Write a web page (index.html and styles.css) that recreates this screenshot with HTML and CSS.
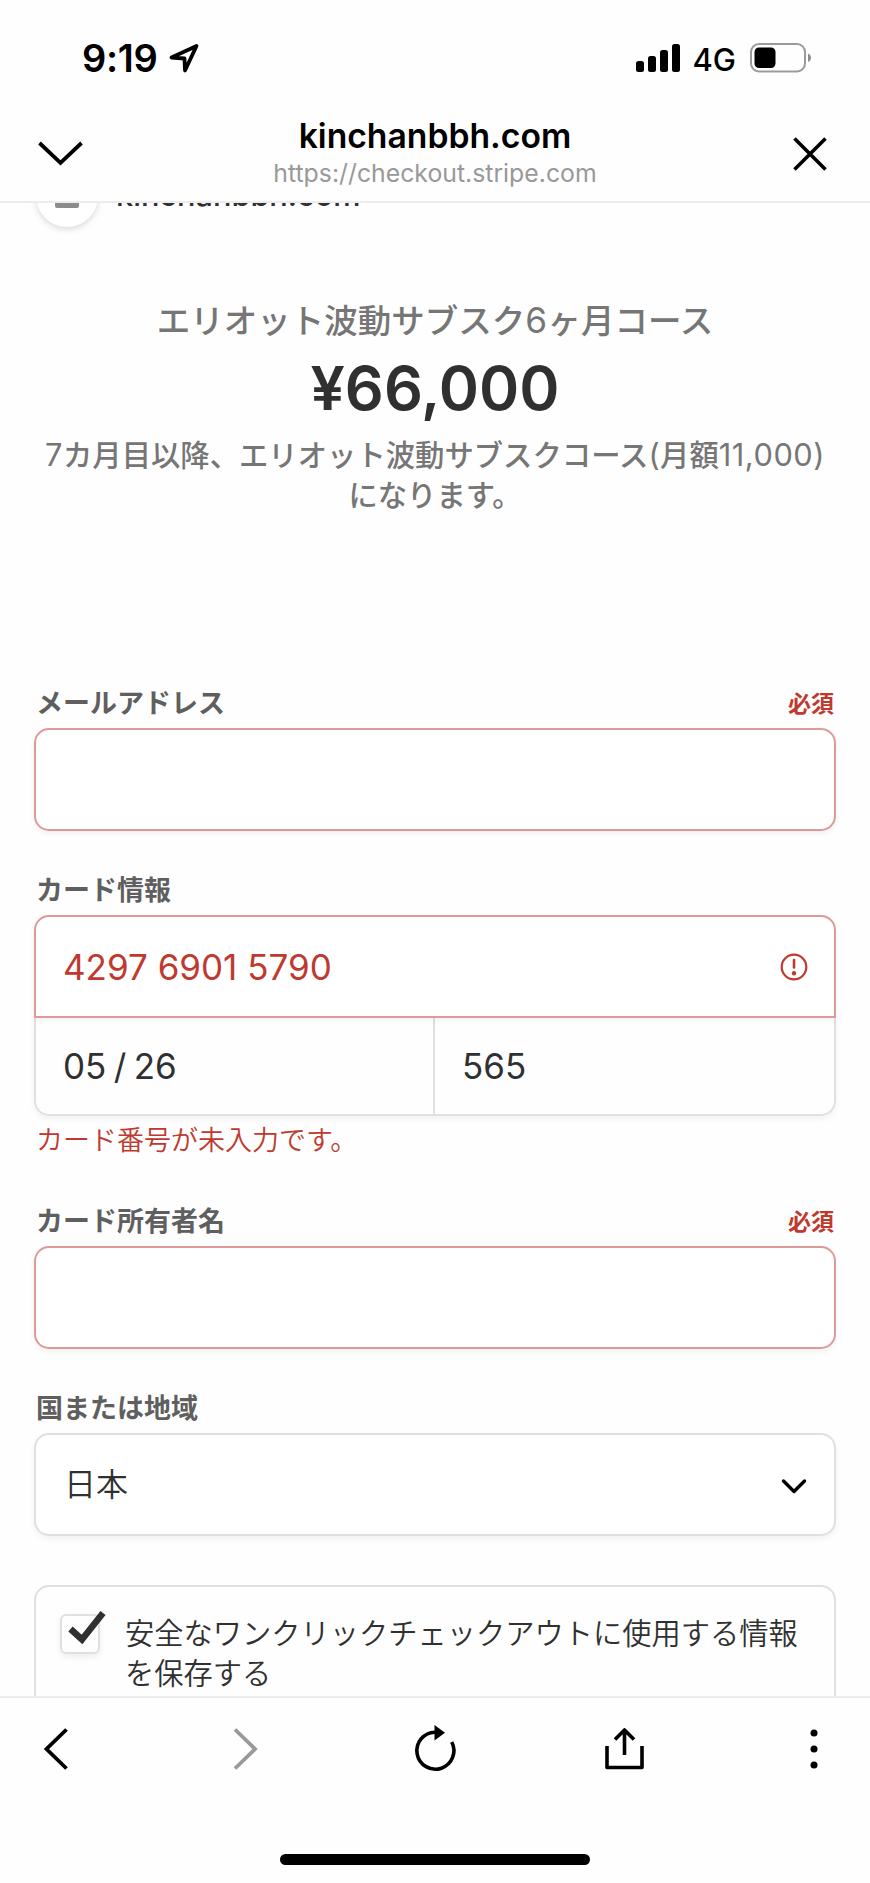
FILE: index.html
```
<!DOCTYPE html>
<html lang="ja">
<head>
  <meta charset="UTF-8">
  <meta name="viewport" content="width=device-width, initial-scale=1.0">
  <title>kinchanbbh.com</title>
  <link rel="stylesheet" href="styles.css">
</head>
<body>
  <!-- ステータスバー -->
  <div class="status-bar">
    <span class="time">9:19</span>
    <svg class="location" width="30" height="30" viewBox="0 0 30 30"><path d="M27.500 3 2.500 14.500l13 1 .5 12z" fill="none" stroke="#000" stroke-width="3.800" stroke-linejoin="round"/></svg>
    <svg class="signal" width="44" height="28" viewBox="0 0 44 28">
      <rect x="0" y="17" width="8" height="11" rx="2.5"/>
      <rect x="12" y="12" width="8" height="16" rx="2.5"/>
      <rect x="24" y="6" width="8" height="22" rx="2.5"/>
      <rect x="36" y="0" width="8" height="28" rx="2.5"/>
    </svg>
    <span class="network">4G</span>
    <svg class="battery" width="62" height="30" viewBox="0 0 62 30">
      <rect x="1" y="1" width="54" height="27.5" rx="8" fill="none" stroke="#9b9b9b" stroke-width="2"/>
      <rect x="4.5" y="4.5" width="21" height="20.5" rx="4.5"/>
      <path d="M58 10.5c4 1.500 4 7 0 8.500z" fill="#8e8e8e"/>
    </svg>
  </div>

  <!-- ヘッダー -->
  <div class="header">
    <svg width="48" height="28" viewBox="0 0 48 28"><path d="M3.500 4 24.500 24 45.500 4" fill="none" stroke="#000" stroke-width="3.800"/></svg>
    <div class="header-title">
      <div class="site">kinchanbbh.com</div>
      <div class="url">https://checkout.stripe.com</div>
    </div>
    <svg width="36" height="36" viewBox="0 0 36 36"><path d="M2.500 2.500l31 31M33.500 2.500l-31 31" fill="none" stroke="#000" stroke-width="3.600"/></svg>
  </div>

  <!-- 決済ページ -->
  <div class="content">
    <div class="brand">
      <div class="brand-icon"><span></span></div>
      <span class="brand-name">kinchanbbh.com</span>
    </div>

    <div class="summary">
      <div class="product">エリオット波動サブスク<span class="num">6</span>ヶ月コース</div>
      <div class="price">¥66,000</div>
      <div class="description"><span class="num">7</span>カ月目以降、エリオット波動サブスクコース<span class="num">(</span>月額<span class="num">11,000)</span><br>になります。</div>
    </div>

    <div class="field">
      <div class="label"><span>メールアドレス</span><span class="required">必須</span></div>
      <div class="input error"></div>
    </div>

    <div class="field card-field">
      <div class="label"><span>カード情報</span></div>
      <div class="input error card-number">
        <span>4297 6901 5790</span>
        <svg width="28" height="28" viewBox="0 0 28 28"><circle cx="14" cy="14" r="12.300" fill="none" stroke="#c0392f" stroke-width="2.200"/><path d="M14 7v7.500" stroke="#c0392f" stroke-width="2.600" stroke-linecap="round"/><circle cx="14" cy="20.300" r="2.200" fill="#c0392f"/></svg>
      </div>
      <div class="card-row">
        <div class="expiry">05 / 26</div>
        <div class="cvc">565</div>
      </div>
      <div class="error-text">カード番号が未入力です。</div>
    </div>

    <div class="field">
      <div class="label"><span>カード所有者名</span><span class="required">必須</span></div>
      <div class="input error"></div>
    </div>

    <div class="field">
      <div class="label"><span>国または地域</span></div>
      <div class="input country">
        <span>日本</span>
        <svg width="28" height="18" viewBox="0 0 28 18"><path d="M3.500 5 14 15.500 24.500 5" fill="none" stroke="#000" stroke-width="3.400" stroke-linecap="round" stroke-linejoin="round"/></svg>
      </div>
    </div>

    <div class="save-box">
      <div class="checkbox">
        <svg width="38" height="34" viewBox="0 0 38 34"><path d="M2.500 19 14 29.500 35 3" fill="none" stroke="#303030" stroke-width="6.500"/></svg>
      </div>
      <div class="save-text">安全なワンクリックチェックアウトに使用する情報<br>を保存する</div>
    </div>
  </div>

  <!-- ツールバー -->
  <div class="toolbar">
    <svg width="46" height="46" viewBox="0 0 46 46"><path d="M33.500 3.500 13.500 23l20 19.500" fill="none" stroke="#000" stroke-width="3.800"/></svg>
    <svg width="46" height="46" viewBox="0 0 46 46"><path d="M12 3.500 32 23 12 42.500" fill="none" stroke="#999" stroke-width="3.800"/></svg>
    <svg width="46" height="46" viewBox="0 0 46 46"><path d="M28 6.200H23A18.500 18.500 0 1 0 39.700 16" fill="none" stroke="#000" stroke-width="3.600"/><path d="M22.500-1 33 6.700 22.500 14.500z"/></svg>
    <svg width="46" height="46" viewBox="0 0 46 46"><path d="M5 20v21.500h35V20M22.500 29V4M13 13.500 22.500 4l9.500 9.500" fill="none" stroke="#000" stroke-width="3.600" stroke-linejoin="round"/></svg>
    <svg width="46" height="46" viewBox="0 0 46 46"><circle cx="23" cy="7" r="3.500"/><circle cx="23" cy="23" r="3.500"/><circle cx="23" cy="39" r="3.500"/></svg>
  </div>
  <div class="home-indicator"></div>
</body>
</html>
```
FILE: styles.css
```
* { box-sizing: border-box; }
body { margin: 0; height: 1883px; overflow: hidden; display: flex; flex-direction: column; background: #fefefe; color: #303030; font-family: Inter, "Noto Sans CJK JP", sans-serif; }
svg { display: block; flex-shrink: 0; overflow: visible; }

/* ステータスバー */
.status-bar { height: 116px; display: flex; align-items: center; padding-left: 82px; padding-right: 58px; color: #000; }
.time { font-size: 38px; font-weight: 600; letter-spacing: -0.3px; }
.location { margin-left: 11px; }
.signal { margin-left: auto; }
.network { font-size: 31px; font-weight: 450; margin: 2px 14px 0 12px; }

/* ヘッダー */
.header { height: 87px; display: flex; justify-content: space-between; padding: 0 42px 0 36px; border-bottom: 2px solid #ececec; color: #000; }
.header > svg:first-child { margin-top: 23px; }
.header > svg:last-child { margin-top: 20px; }
.header-title { flex: 1; margin-right: 6px; text-align: center; }
.site { font-size: 33.700px; line-height: 39px; font-weight: 600; }
.url { margin-top: 1px; font-size: 24.800px; line-height: 34px; color: #999; }

/* 決済ページ */
.content { height: 1493px; flex-shrink: 0; padding: 0 34px; overflow: hidden; }
.brand { display: flex; align-items: center; height: 62px; margin-top: -38px; }
.brand-icon { width: 62px; height: 62px; margin-left: 2px; border-radius: 50%; background: #fff; box-shadow: 0 2px 6px rgba(60,66,87,0.2); display: flex; justify-content: center; align-items: center; }
.brand-icon span { width: 24px; height: 24px; border-radius: 2px; background: #8c8c8c; }
.brand-name { margin: -3px 0 0 18px; font-size: 30.700px; font-weight: 500; }

.summary { margin: 0 -10px; padding-top: 70px; height: 457px; text-align: center; color: #767676; font-weight: 500; white-space: nowrap; }
.product { font-size: 33.500px; line-height: 48px; }
.price { font-size: 61px; line-height: 76px; margin-top: 5px; font-weight: 600; color: #303030; }
.description { font-size: 29.350px; line-height: 40px; margin-top: 10px; }
.num { font-size: 1.05em; line-height: 1; font-weight: 400; letter-spacing: 0.500px; }

.field { margin-bottom: 40px; }
.card-field { margin-bottom: 43px; }
.label { display: flex; justify-content: space-between; align-items: center; height: 40px; padding: 0 2px; margin-bottom: 4px; font-size: 27px; line-height: 40px; font-weight: 600; color: #5f5f5f; }
.required { font-size: 23px; color: #c0392f; }
.input { height: 103px; display: flex; align-items: center; justify-content: space-between; padding: 0 26px 0 27px; border: 2px solid #e0e0e0; border-radius: 15px; background: #fff; box-shadow: 0 3px 6px rgba(0,0,0,0.05); font-size: 35px; }
.input.error { border-color: #de9a98; }
.card-number { position: relative; border-radius: 15px 15px 0 0; color: #c0392f; }
.card-row { display: flex; height: 98px; border: 2px solid #e0e0e0; border-top: none; border-radius: 0 0 15px 15px; box-shadow: 0 3px 6px rgba(0,0,0,0.05); font-size: 35px; line-height: 96px; }
.expiry { width: 399px; padding-left: 27px; border-right: 2px solid #e0e0e0; word-spacing: -2.500px; }
.cvc { padding-left: 27px; }
.error-text { height: 40px; padding-left: 2px; margin-top: 3px; font-size: 27px; line-height: 43px; font-weight: 350; color: #c0392f; }
.country { padding-left: 28px; font-size: 32px; font-weight: 350; line-height: 46px; }

.save-box { display: flex; height: 200px; margin-top: 49px; padding: 27px 0 0 24px; border: 2px solid #e0e0e0; border-radius: 15px; }
.checkbox { position: relative; width: 40px; height: 40px; border: 2px solid #e0e0e0; border-radius: 6px; box-shadow: 0 3px 6px rgba(0,0,0,0.07); }
.checkbox svg { position: absolute; left: 6px; top: -6px; }
.save-text { margin-left: 25px; font-size: 29.250px; line-height: 40px; font-weight: 350; white-space: nowrap; }

/* ツールバー */
.toolbar { display: flex; justify-content: space-between; height: 158px; flex-shrink: 0; padding: 28px 33px 0; border-top: 2px solid #ececec; }
.home-indicator { width: 310px; height: 11px; margin: 0 auto; border-radius: 6px; background: #000; flex-shrink: 0; }
```
